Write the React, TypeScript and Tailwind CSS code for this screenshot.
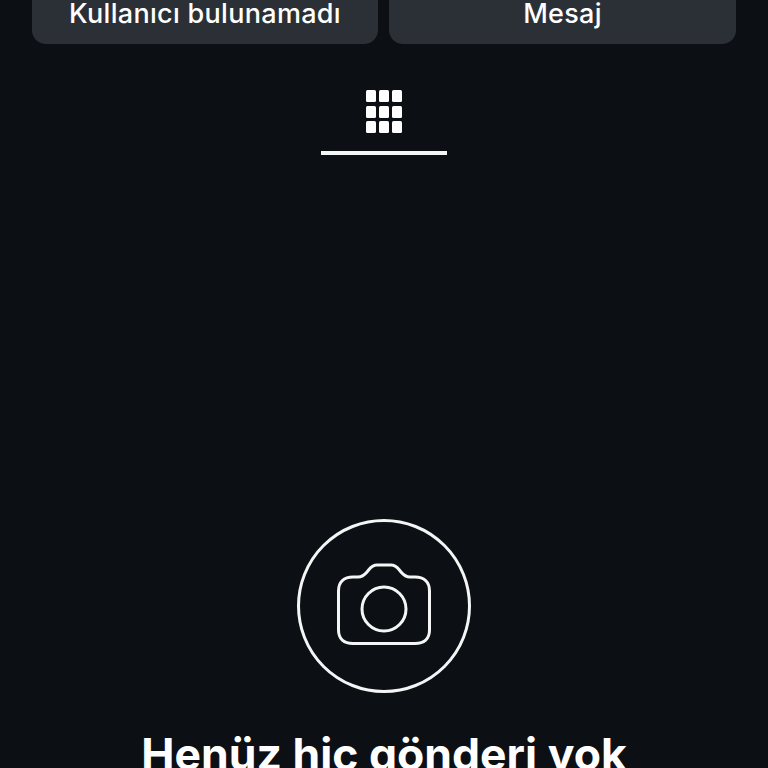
export default function App() {
  return (
    <div className="h-[768px] w-[768px] overflow-hidden bg-[#0c1014] text-white font-['Inter','Liberation_Sans',sans-serif]">
      <div className="flex h-[44px] gap-[11px] pl-[32px] pr-[32px]">
        <div className="flex h-full w-[346px] items-end justify-center rounded-b-[14px] bg-[#2b3036] pb-[15px] text-[27px] font-medium leading-[30px] tracking-[0.3px]">
          Kullanıcı bulunamadı
        </div>
        <div className="flex h-full w-[347px] items-end justify-center rounded-b-[14px] bg-[#2b3036] pb-[15px] text-[27px] font-medium leading-[30px] tracking-[0.3px]">
          Mesaj
        </div>
      </div>
      <div className="mt-[46px] flex flex-col items-center">
        <div className="grid grid-cols-[repeat(3,9.5px)] grid-rows-[repeat(3,12px)] gap-x-[3.5px] gap-y-[3.5px]">
          {Array.from({ length: 9 }).map((_, i) => (
            <div key={i} className="rounded-[1.5px] bg-white" />
          ))}
        </div>
        <div className="mt-[18px] h-[4px] w-[126px] bg-[#f5f5f5]" />
      </div>
      <div className="mt-[364px] flex flex-col items-center">
        <div className="flex h-[174px] w-[174px] items-start justify-center rounded-full border-[3px] border-[#f5f5f5] pt-[40px]">
          <svg width="96" height="84" viewBox="0 0 96 84" fill="none" stroke="#f5f5f5" strokeWidth="3">
            <path d="M17 15H22C26 15 28.5 13 31 10L33 7.5C35.5 4.5 37.5 3 41 3H55C58.5 3 60.5 4.5 63 7.5L65 10C67.5 13 70 15 74 15H79C88 15 93.5 20 93.5 29V68C93.5 77 88 81.5 79 81.5H17C8 81.5 2.5 77 2.5 68V29C2.5 20 8 15 17 15Z" strokeLinejoin="round" />
            <circle cx="48" cy="47" r="22" />
          </svg>
        </div>
        <h1 className="mt-[34px] whitespace-nowrap text-[44.5px] font-bold leading-[54px]">Henüz hiç gönderi yok</h1>
      </div>
    </div>
  );
}
